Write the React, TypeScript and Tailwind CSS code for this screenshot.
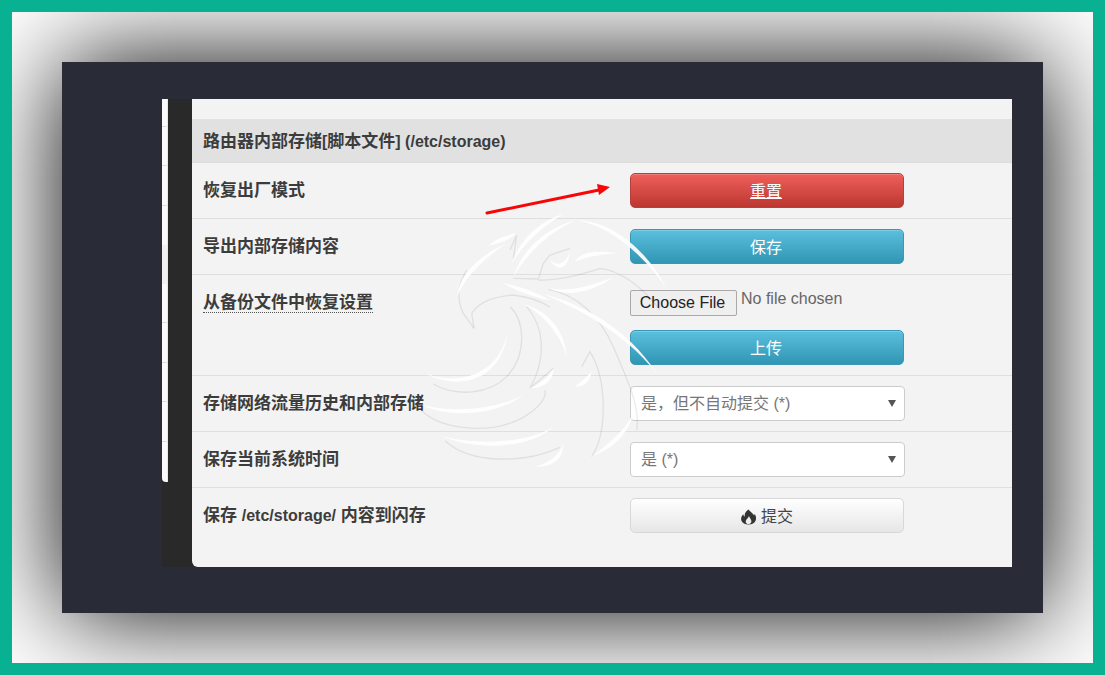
import React from 'react';

const sideRows = [28, 39, 40, 39, 39, 39, 40, 39, 40, 40];

// tapered brush stroke: same cubic out and back, bowed by w on the way back
function taper(pts: number[], w: number) {
  const [x0, y0, a, b, c, d, x1, y1] = pts;
  const dx = x1 - x0;
  const dy = y1 - y0;
  const len = Math.hypot(dx, dy) || 1;
  const nx = (-dy / len) * w;
  const ny = (dx / len) * w;
  return `M${x0} ${y0} C${a} ${b} ${c} ${d} ${x1} ${y1} C${c + nx} ${d + ny} ${a + nx} ${b + ny} ${x0} ${y0} Z`;
}

const whiteStrokes = [
  [265, 137, 290, 115, 320, 105, 350, 100],
  [335, 190, 365, 110, 425, 62, 490, 42],
  [340, 232, 365, 150, 440, 80, 530, 60],
  [530, 60, 640, 65, 740, 150, 800, 265],
  [172, 292, 175, 230, 230, 170, 320, 130],
  [310, 250, 360, 258, 410, 278, 450, 300],
  [430, 282, 540, 310, 680, 380, 770, 520],
  [445, 265, 510, 278, 580, 255, 640, 232],
  [525, 185, 540, 160, 575, 148, 650, 160],
  [370, 312, 440, 330, 495, 390, 500, 470],
  [75, 520, 150, 552, 295, 545, 325, 390],
  [60, 612, 150, 642, 290, 628, 370, 585],
  [125, 708, 230, 738, 390, 728, 460, 680],
  [405, 800, 450, 790, 480, 762, 490, 730],
  [525, 560, 540, 548, 560, 530, 575, 515],
  [445, 170, 465, 205, 500, 195, 510, 150],
  [390, 565, 420, 552, 450, 530, 460, 505],
  [575, 770, 620, 735, 670, 700, 700, 640],
];

const greyLines = [
  'M330 150 L350 105 L340 175',
  'M215 340 C240 300 290 290 340 285 C380 290 420 300 450 322',
  'M222 385 L190 340 C170 300 170 260 200 210',
  'M222 385 L215 340',
  'M415 237 L340 235 M415 237 L430 190 L450 165 L510 145',
  'M415 240 C480 242 550 222 600 205 C650 210 720 250 780 330',
  'M330 320 C372 360 385 460 320 530 C270 582 170 592 100 552',
  'M380 320 C432 380 442 470 390 565 L460 505',
  'M445 268 C530 282 600 350 640 440 C682 540 722 620 710 690',
  'M60 625 C100 682 260 712 370 652 C420 622 440 592 435 570',
  'M135 722 C210 792 370 792 480 742',
  'M575 770 C622 700 622 540 570 455 L545 500',
];

function Row({ label, height, children }: { label: React.ReactNode; height: string; children: React.ReactNode }) {
  return (
    <div className={`flex border-b border-[#dfdfdf] ${height}`}>
      <div className="w-[438px] pl-[11px] pt-[16px] text-[17px] leading-[24px] font-bold text-[#3c3c3c]">{label}</div>
      <div className="w-[276px] pt-[10px]">{children}</div>
    </div>
  );
}

function ColorButton({ tone, children }: { tone: 'red' | 'blue'; children: React.ReactNode }) {
  const toneClass =
    tone === 'red'
      ? 'from-[#ee5f5b] to-[#bd362f] border-[#b5413c]'
      : 'from-[#5bc0de] to-[#2f96b4] border-[#3b97b3]';
  return (
    <button className={`block w-[274px] h-[35px] pt-[2px] pr-[2px] rounded-[5px] border bg-gradient-to-b ${toneClass} text-[16px] text-white shadow-[inset_0_1px_0_rgba(255,255,255,0.2)]`}>
      {children}
    </button>
  );
}

function SelectBox({ value }: { value: string }) {
  return (
    <div className="relative w-[275px] h-[35px]">
      <select
        defaultValue={value}
        className="w-full h-full appearance-none rounded-[4px] border border-[#ccc] bg-white pl-[10px] text-[16px] text-[#777]"
      >
        <option>{value}</option>
      </select>
      <span className="absolute right-[9px] top-[14px] w-0 h-0 border-x-[4px] border-t-[7px] border-x-transparent border-t-[#555]" />
    </div>
  );
}

export default function App() {
  return (
    <div className="w-[1105px] h-[675px] border-[12px] border-[#08b192] bg-white overflow-hidden font-['Liberation_Sans','Noto_Sans_CJK_SC',sans-serif]">
      <div className="pt-[50px] pl-[50px]">
        <div className="w-[981px] h-[551px] bg-[#292b37] pt-[37px] pl-[100px] shadow-[0_0_100px_#000]">
          <div className="relative flex w-[850px] h-[468px] bg-[#292929]">
            {/* side menu strip */}
            <div className="w-[6px] h-[383px] bg-[#fafafa] border-r border-[#e8e8e8] rounded-bl-[4px] overflow-hidden">
              {sideRows.map((h, i) => (
                <div
                  key={i}
                  style={{ height: h }}
                  className={i === 4 ? 'bg-[#f1f1f1]' : i === 3 || i === 9 ? '' : 'border-b border-[#dddddd]'}
                />
              ))}
            </div>
            <div className="w-[24px]" />

            {/* main panel */}
            <div className="w-[820px] h-[468px] bg-[#f3f3f3] rounded-bl-[6px]">
              <div className="h-[21px] border-b border-[#e2e2e2]" />
              <div className="h-[43px] bg-[#e1e1e1] border-b border-[#dcdcdc] pl-[11px] pt-[10px] text-[17px] leading-[24px] font-bold text-[#3c3c3c]">
                路由器内部存储<span className="text-[16px]">[</span>脚本文件<span className="text-[16px]">] (/etc/storage)</span>
              </div>
              <Row label="恢复出厂模式" height="h-[56px]">
                <ColorButton tone="red">
                  <span className="underline">重置</span>
                </ColorButton>
              </Row>
              <Row label="导出内部存储内容" height="h-[56px]">
                <ColorButton tone="blue">保存</ColorButton>
              </Row>
              <Row label={<span className="border-b border-dotted border-[#555]">从备份文件中恢复设置</span>} height="h-[101px]">
                <div className="flex items-start pt-[5px] h-[45px]">
                  <button className="w-[107px] h-[26px] pr-[2px] rounded-[2px] bg-[#efefef] border border-[#a9a9a9] text-[16px] text-[#222]">
                    Choose File
                  </button>
                  <span className="ml-[4px] text-[16px] leading-[18px] text-[#666]">No file chosen</span>
                </div>
                <ColorButton tone="blue">上传</ColorButton>
              </Row>
              <Row label="存储网络流量历史和内部存储" height="h-[56px]">
                <SelectBox value="是，但不自动提交 (*)" />
              </Row>
              <Row label="保存当前系统时间" height="h-[56px]">
                <SelectBox value="是 (*)" />
              </Row>
              <div className="flex">
                <div className="w-[438px] pl-[11px] pt-[16px] text-[17px] leading-[24px] font-bold text-[#3c3c3c]">
                  保存 <span className="text-[16px]">/etc/storage/</span> 内容到闪存
                </div>
                <div className="pt-[10px]">
                  <button className="flex items-center justify-center gap-[5px] w-[274px] h-[35px] pt-[2px] rounded-[5px] border border-[#d8d8d8] bg-gradient-to-b from-white to-[#e6e6e6] text-[16px] text-[#444]">
                    <svg viewBox="0 0 16 16" className="w-[15px] h-[16px]">
                      <path
                        fill="#333"
                        fillRule="evenodd"
                        d="M8 0 C9.5 2.5 13 4 14 6.5 C14.5 5.5 14.5 5 14.5 4.5 C16 6.5 16.5 9.5 15.5 12 C14.5 14.5 12 16 8 16 C4 16 1.5 14.5 0.5 12 C-0.5 9.5 0.5 7 2.5 5 C2.5 6 3 7 4 7.5 C3.5 4.5 5 2 8 0 Z M8.5 7 C8 9.5 5 10.5 5 13 C5 14.5 6.5 15.5 8 15.5 C10 15.5 11.5 14 11 12 C10.7 10 9 9 8.5 7 Z"
                      />
                    </svg>
                    提交
                  </button>
                </div>
              </div>
            </div>

            {/* logo watermark */}
            <svg viewBox="0 0 840 840" className="absolute left-[238px] top-[101px] w-[280px] h-[280px] pointer-events-none" fill="none">
              {greyLines.map((d) => (
                <path key={d} d={d} stroke="#000" strokeOpacity="0.08" strokeWidth="4" />
              ))}
              {whiteStrokes.map((pts) => (
                <path key={pts.join()} d={taper(pts, 17)} fill="#fff" fillOpacity="0.92" />
              ))}
            </svg>

            {/* annotation arrow */}
            <svg viewBox="0 0 130 34" className="absolute left-[322px] top-[83px] w-[130px] h-[34px] pointer-events-none" fill="none">
              <path d="M3 31 L115 8" stroke="#fa0505" strokeWidth="3" strokeLinecap="round" />
              <path d="M126 5 L113 2 L115 13 Z" fill="#fa0505" />
            </svg>
          </div>
        </div>
      </div>
    </div>
  );
}
